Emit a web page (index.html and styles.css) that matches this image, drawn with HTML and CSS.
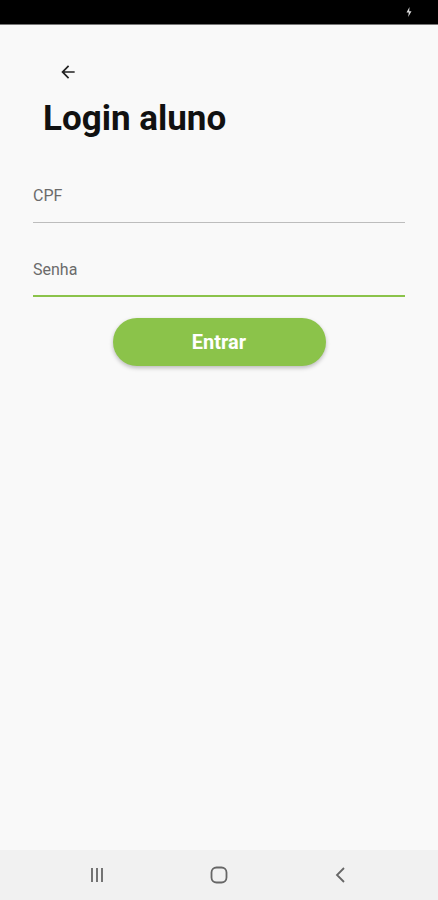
FILE: index.html
```html
<!DOCTYPE html>
<html lang="pt">

<head>
    <meta charset="UTF-8" />
    <meta name="viewport" content="width=device-width, initial-scale=1.0" />
    <title>Login aluno</title>
    <link rel="stylesheet" href="styles.css">
</head>

<body>
    <div class="status-bar">
        <svg class="charge" width="6" height="10" viewBox="0 0 6 10">
            <path d="M3.5 0 L0.5 5.5 H2.8 L2.2 10 L5.5 4.2 H3.2 Z" fill="#ddd" />
        </svg>
    </div>

    <div class="screen">
        <button class="back-button" aria-label="Voltar">
            <svg width="20" height="20" viewBox="0 0 24 24">
                <path d="M20 11H7.83l5.59-5.59L12 4l-8 8 8 8 1.41-1.41L7.83 13H20v-2z" fill="#222" />
            </svg>
        </button>
        <h1>Login aluno</h1>

        <form class="login-form">
            <label class="field">
                <input type="text" placeholder="CPF" />
            </label>
            <label class="field focused">
                <input type="password" placeholder="Senha" />
            </label>
            <button type="submit" class="submit">Entrar</button>
        </form>
    </div>

    <div class="nav-bar">
        <svg width="20" height="20" viewBox="0 0 20 20">
            <path d="M5 3v14M10 3v14M15 3v14" stroke="#666" stroke-width="1.8" fill="none" />
        </svg>
        <svg width="20" height="20" viewBox="0 0 20 20">
            <rect x="2.5" y="2.5" width="15" height="15" rx="5" stroke="#666" stroke-width="1.8" fill="none" />
        </svg>
        <svg width="20" height="20" viewBox="0 0 20 20">
            <path d="M13 3L6 10l7 7" stroke="#666" stroke-width="1.8" fill="none" />
        </svg>
    </div>
</body>

</html>
```

FILE: styles.css
```css
* {
    box-sizing: border-box;
}

body {
    font-family: Roboto, 'Noto Sans', sans-serif;
    background-color: #f9f9f9;
    margin: 0;
    height: 900px;
    display: flex;
    flex-direction: column;
}

.status-bar {
    height: 25px;
    background: #000;
    border-bottom: 1px solid #777;
    display: flex;
    justify-content: flex-end;
    align-items: center;
    padding-right: 26px;
}

.screen {
    flex: 1;
    padding: 0 33px;
}

.back-button {
    background: none;
    border: none;
    padding: 0;
    margin: 37px 0 0 25px;
    width: 20px;
    height: 20px;
    display: block;
    cursor: pointer;
}

h1 {
    font-size: 35px;
    font-weight: 700;
    color: #111;
    margin: 17px 0 0 10px;
    line-height: 40px;
}

.login-form {
    margin-top: 31px;
    display: flex;
    flex-direction: column;
}

.field {
    display: block;
    border-bottom: 1px solid #bdbdbd;
    margin-bottom: 21px;
}

.field.focused {
    border-bottom: 2px solid #8bc34a;
    margin-bottom: 21px;
}

.field input {
    width: 100%;
    border: none;
    background: transparent;
    font-family: inherit;
    font-size: 16px;
    color: #333;
    padding: 16px 0 17px;
    outline: none;
}

.field.focused input {
    padding-bottom: 16px;
}

.field input::placeholder {
    color: #6b6b6b;
}

.submit {
    align-self: center;
    width: 213px;
    height: 48px;
    border: none;
    border-radius: 24px;
    background-color: #8bc34a;
    color: #fff;
    font-family: inherit;
    font-size: 20px;
    font-weight: 700;
    box-shadow: 0 2px 4px rgba(0, 0, 0, 0.25);
    cursor: pointer;
}

.nav-bar {
    height: 50px;
    background: #f1f1f1;
    display: flex;
    justify-content: center;
    align-items: center;
    gap: 102px;
}
```
